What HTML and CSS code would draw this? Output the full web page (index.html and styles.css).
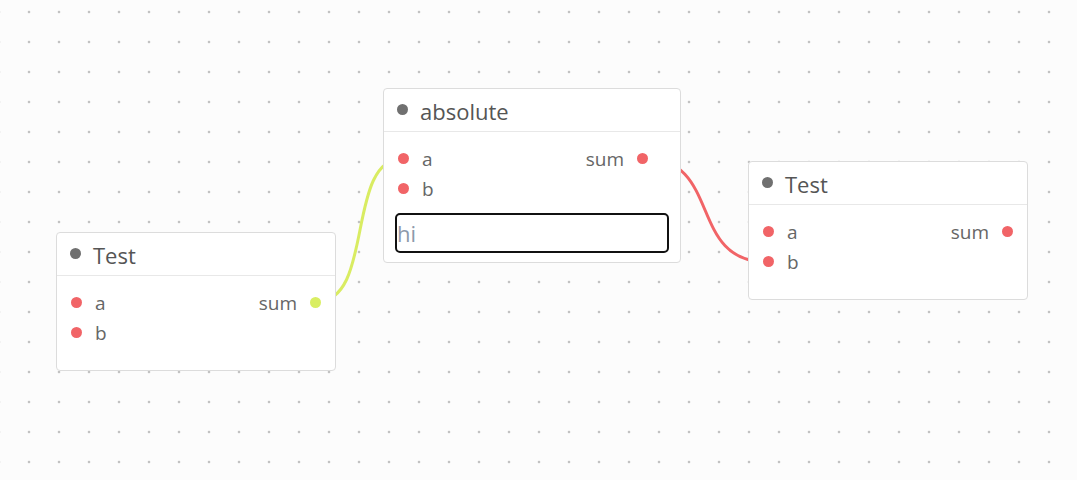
FILE: index.html
```html
<!DOCTYPE html>
<html lang="en">
<head>
<meta charset="utf-8">
<title>Node editor</title>
<link rel="stylesheet" href="styles.css">
</head>
<body>
<div class="canvas">
  <svg class="wires" width="1077" height="480" viewBox="0 0 1077 480">
    <path class="wire wire-yellow" d="M316 302 C 376 302, 344 158, 404 158"/>
    <path class="wire wire-red" d="M643 158 C 723 158, 687 262, 767 262"/>
  </svg>

  <div class="node node-left">
    <div class="node-header"><span class="hdot"></span><span class="title">Test</span></div>
    <div class="node-body body-test">
      <div class="row"><span class="pin pin-red"></span><span class="label">a</span><span class="spacer"></span><span class="label">sum</span><span class="pin pin-yellow"></span></div>
      <div class="row"><span class="pin pin-red"></span><span class="label">b</span></div>
    </div>
  </div>

  <div class="node node-abs">
    <div class="node-header"><span class="hdot"></span><span class="title">absolute</span></div>
    <div class="node-body body-abs">
      <div class="row"><span class="pin pin-red"></span><span class="label">a</span><span class="spacer"></span><span class="label">sum</span><span class="pin pin-red"></span></div>
      <div class="row"><span class="pin pin-red"></span><span class="label">b</span></div>
      <input class="field" type="text" value="hi">
    </div>
  </div>

  <div class="node node-right">
    <div class="node-header"><span class="hdot"></span><span class="title">Test</span></div>
    <div class="node-body body-test">
      <div class="row"><span class="pin pin-red"></span><span class="label">a</span><span class="spacer"></span><span class="label">sum</span><span class="pin pin-red"></span></div>
      <div class="row"><span class="pin pin-red"></span><span class="label">b</span></div>
    </div>
  </div>
</div>
</body>
</html>
```

FILE: styles.css
```css
html, body {
  margin: 0;
  padding: 0;
}
body {
  width: 1077px;
  height: 480px;
  overflow: hidden;
  font-family: "Open Sans", "Noto Sans", sans-serif;
}
.canvas {
  position: relative;
  width: 1077px;
  height: 480px;
  background-color: #fcfcfc;
  background-image: radial-gradient(circle, #c2c2c2 1px, rgba(194,194,194,0) 1.7px);
  background-size: 30px 30px;
  background-position: 14px 27px;
}
.wires {
  position: absolute;
  left: 0;
  top: 0;
}
.wire {
  fill: none;
  stroke-width: 3;
}
.wire-yellow { stroke: #d9ec62; }
.wire-red { stroke: #f16467; }

.node {
  position: absolute;
  box-sizing: border-box;
  background: #fff;
  border: 1px solid #dcdcdc;
  border-radius: 4px;
}
.node-left { left: 56px; top: 232px; width: 280px; }
.node-abs { left: 383px; top: 88px; width: 298px; }
.node-right { left: 748px; top: 161px; width: 280px; }

.node-header {
  height: 42px;
  display: flex;
  align-items: center;
  padding-left: 13px;
  border-bottom: 1px solid #e8e8e8;
}
.hdot {
  width: 11px;
  height: 11px;
  border-radius: 50%;
  background: #707070;
  margin-right: 12px;
  margin-top: -2px;
  flex: none;
}
.title {
  font-size: 22px;
  color: #555;
  line-height: 1;
  position: relative;
  top: 1px;
}
.node-body {
  padding: 11px 11px 9px;
}
.body-test { padding-bottom: 23px; }
.row {
  width: 256px;
  box-sizing: border-box;
  padding: 0 3px;
  height: 30px;
  display: flex;
  align-items: center;
}
.pin {
  width: 11px;
  height: 11px;
  border-radius: 50%;
  flex: none;
}
.pin-red { background: #f16467; }
.pin-yellow { background: #d9ee62; }
.label {
  font-size: 19px;
  color: #666;
  line-height: 1;
  margin: 0 13px;
  position: relative;
  top: 1px;
}
.spacer { flex: 1; }
.field {
  display: block;
  box-sizing: border-box;
  margin-top: 10px;
  width: 274px;
  height: 40px;
  border: 2px solid #111;
  border-radius: 5px;
  padding: 0;
  font-family: "Open Sans", "Noto Sans", sans-serif;
  font-size: 22px;
  color: #8d99aa;
  background: #fff;
  outline: none;
}
```
